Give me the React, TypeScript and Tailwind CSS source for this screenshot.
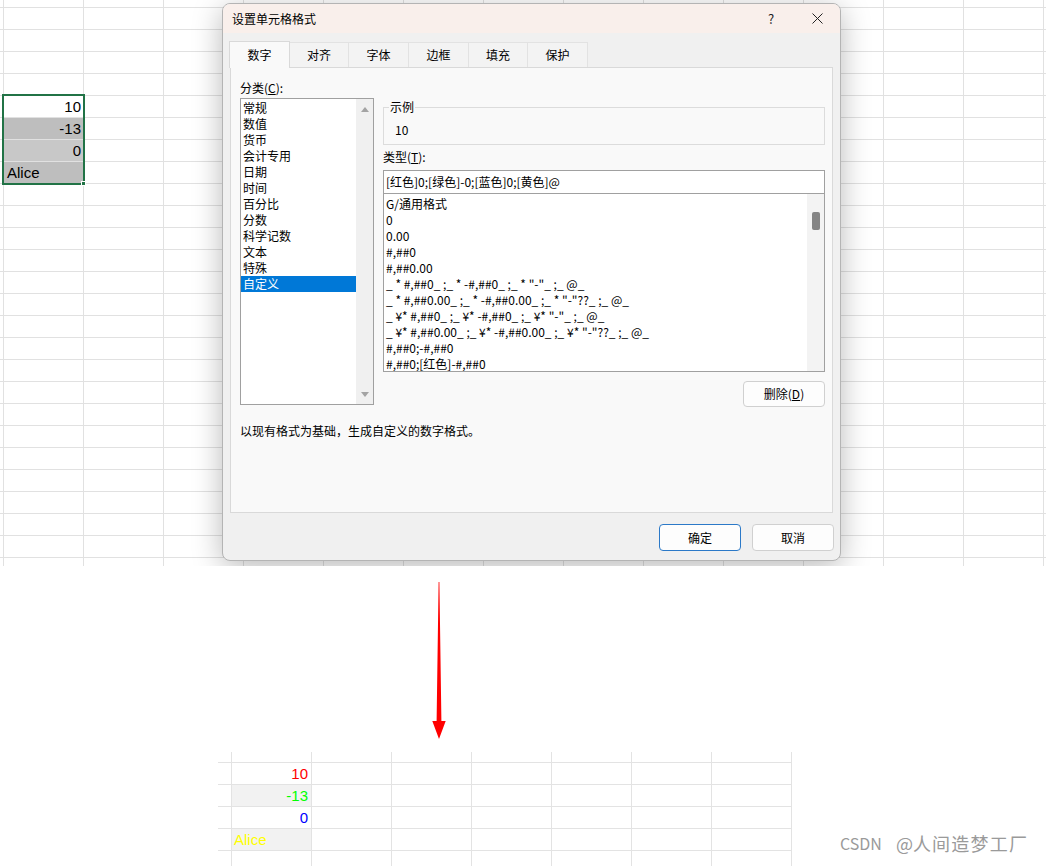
import React from "react";

const topRowH = (i: number) => (i === 0 || i === 26 ? "h-[8px]" : "h-[22px]");
const topColW = (j: number) => (j === 0 ? "w-[4px]" : j === 14 ? "flex-1" : "w-[80px]");

type Val = { t: string; bg: string; align: string; color: string };

const topVals: Record<number, Val> = {
  5: { t: "10", bg: "bg-white", align: "justify-end pr-[2px]", color: "text-black" },
  6: { t: "-13", bg: "bg-[#bebebe]", align: "justify-end pr-[2px]", color: "text-black" },
  7: { t: "0", bg: "bg-[#c8c8c8]", align: "justify-end pr-[2px]", color: "text-black" },
  8: { t: "Alice", bg: "bg-[#bebebe]", align: "justify-start pl-[3px]", color: "text-black" },
};

function TopSheet() {
  const rows = Array.from({ length: 27 }, (_, i) => i);
  const cols = Array.from({ length: 15 }, (_, j) => j);
  return (
    <div className="flex flex-col">
      {rows.map((i) => (
        <div key={i} className={`flex ${topRowH(i)}`}>
          {cols.map((j) => {
            const v = j === 1 ? topVals[i] : undefined;
            return (
              <div
                key={j}
                className={`${topColW(j)} shrink-0 border-[#e1e1e1] ${j === 14 ? "" : "border-r"} ${
                  i === 26 ? "" : "border-b"
                } ${v ? `${v.bg} flex items-center ${v.align}` : ""}`}
              >
                {v && <span className={`text-[15px] leading-[17px] ${v.color}`}>{v.t}</span>}
              </div>
            );
          })}
        </div>
      ))}
    </div>
  );
}

const botRowH = (i: number) =>
  i === 0 ? "h-[11px]" : i === 5 ? "h-[15px]" : "h-[22px]";
const botColW = (j: number) => (j === 0 ? "w-[14px]" : "w-[80px]");

const botVals: Record<number, Val> = {
  1: { t: "10", bg: "bg-white", align: "justify-end pr-[3px]", color: "text-[#ff0000]" },
  2: { t: "-13", bg: "bg-[#f2f2f2]", align: "justify-end pr-[3px]", color: "text-[#00ff00]" },
  3: { t: "0", bg: "bg-white", align: "justify-end pr-[3px]", color: "text-[#0000ff]" },
  4: { t: "Alice", bg: "bg-[#f2f2f2]", align: "justify-start pl-[2px]", color: "text-[#ffff00]" },
};

function BottomSheet() {
  const rows = Array.from({ length: 6 }, (_, i) => i);
  const cols = Array.from({ length: 8 }, (_, j) => j);
  return (
    <div className="flex flex-col w-[574px]">
      {rows.map((i) => (
        <div key={i} className={`flex ${botRowH(i)}`}>
          {cols.map((j) => {
            const v = j === 1 ? botVals[i] : undefined;
            return (
              <div
                key={j}
                className={`${botColW(j)} shrink-0 border-[#e3e3e3] border-r ${
                  i === 5 ? "" : "border-b"
                } ${v ? `${v.bg} flex items-center ${v.align}` : ""}`}
              >
                {v && <span className={`text-[15px] leading-[17px] ${v.color}`}>{v.t}</span>}
              </div>
            );
          })}
        </div>
      ))}
    </div>
  );
}

const categories = ["常规", "数值", "货币", "会计专用", "日期", "时间", "百分比", "分数", "科学记数", "文本", "特殊", "自定义"];

const formats = [
  "G/通用格式",
  "0",
  "0.00",
  "#,##0",
  "#,##0.00",
  '_ * #,##0_ ;_ * -#,##0_ ;_ * "-"_ ;_ @_',
  '_ * #,##0.00_ ;_ * -#,##0.00_ ;_ * "-"??_ ;_ @_',
  '_ ¥* #,##0_ ;_ ¥* -#,##0_ ;_ ¥* "-"_ ;_ @_',
  '_ ¥* #,##0.00_ ;_ ¥* -#,##0.00_ ;_ ¥* "-"??_ ;_ @_',
  "#,##0;-#,##0",
  "#,##0;[红色]-#,##0",
];

const tabs: { t: string; w: string }[] = [
  { t: "对齐", w: "w-[59px]" },
  { t: "字体", w: "w-[60px]" },
  { t: "边框", w: "w-[60px]" },
  { t: "填充", w: "w-[59px]" },
  { t: "保护", w: "w-[60px]" },
];

function Dialog() {
  return (
    <div className="absolute left-[222px] top-[3px] w-[619px] h-[558px] rounded-[8px] border border-[#b4b4b4] bg-[#f0f0f0] shadow-[0_6px_30px_rgba(0,0,0,0.28)] overflow-hidden flex flex-col font-['Noto_Sans_CJK_SC','Noto_Sans',sans-serif] text-[12px] leading-[16px] text-black">
      {/* title bar */}
      <div className="h-[29px] shrink-0 bg-[#f9efeb] flex items-center">
        <span className="pl-[9px] text-[12px]">设置单元格格式</span>
        <div className="ml-auto flex h-full">
          <div className="w-[46px] h-full flex items-center justify-center text-[13px] text-[#222]">?</div>
          <div className="w-[46px] h-full flex items-center justify-center">
            <svg width="11" height="11" viewBox="0 0 11 11">
              <path d="M0.5 0.5 L10.5 10.5 M10.5 0.5 L0.5 10.5" stroke="#222" strokeWidth="1" fill="none" />
            </svg>
          </div>
        </div>
      </div>

      {/* tabs */}
      <div className="mt-[8px] ml-[6px] flex items-end h-[26px]">
        <div className="relative z-10 -mb-px w-[61px] h-[27px] border border-b-0 border-[#d9d9d9] bg-[#f9f9f9] flex items-center justify-center">
          数字
        </div>
        {tabs.map((tb) => (
          <div
            key={tb.t}
            className={`${tb.w} h-[25px] border-t border-r border-[#e2e2e2] bg-[#f3f3f3] flex items-center justify-center`}
          >
            {tb.t}
          </div>
        ))}
      </div>

      {/* panel */}
      <div className="ml-[7px] w-[603px] h-[446px] shrink-0 border border-[#d9d9d9] bg-[#f9f9f9] pt-[12px] pl-[9px] pr-[7px] flex flex-col">
        <div className="flex gap-[9px]">
          {/* left column */}
          <div className="w-[134px] flex flex-col">
            <div className="h-[16px]">
              分类(<span className="underline">C</span>):
            </div>
            <div className="mt-[2px] h-[307px] border border-[#a0a0a0] bg-white flex">
              <div className="flex-1 pt-[1px] flex flex-col">
                {categories.map((c, idx) => (
                  <div
                    key={c}
                    className={`h-[16px] pl-[2px] ${idx === 11 ? "bg-[#0078d7] text-white" : ""}`}
                  >
                    {c}
                  </div>
                ))}
              </div>
              <div className="w-[17px] bg-[#f0f0f0] flex flex-col items-center justify-between pt-[8px] pb-[7px]">
                <svg width="8" height="5" viewBox="0 0 8 5">
                  <path d="M0 5 L4 0 L8 5 Z" fill="#a3a3a3" />
                </svg>
                <svg width="8" height="5" viewBox="0 0 8 5">
                  <path d="M0 0 L8 0 L4 5 Z" fill="#a3a3a3" />
                </svg>
              </div>
            </div>
          </div>

          {/* right column */}
          <div className="w-[442px] flex flex-col pt-[19px]">
            <fieldset className="h-[46px] border border-[#dcdcdc]">
              <legend className="ml-[5px] px-[1px] leading-[16px]">示例</legend>
              <div className="mt-[7px] pl-[11px] leading-[16px]">10</div>
            </fieldset>
            <div className="mt-[4px] h-[16px]">
              类型(<span className="underline">T</span>):
            </div>
            <div className="mt-[5px] h-[24px] border border-[#a0a0a0] bg-white flex items-center pl-[2px]">
              [红色]0;[绿色]-0;[蓝色]0;[黄色]@
            </div>
            <div className="h-[178px] border border-[#a0a0a0] border-t-0 bg-white flex overflow-hidden">
              <div className="flex-1 pt-[2px] pl-[2px] flex flex-col">
                {formats.map((f) => (
                  <div key={f} className="h-[16px] shrink-0 whitespace-pre">
                    {f}
                  </div>
                ))}
              </div>
              <div className="w-[17px] bg-[#f3f3f3] pt-[18px] flex justify-center">
                <div className="w-[8px] h-[18px] rounded-[2px] bg-[#858585]" />
              </div>
            </div>
            <div className="mt-[9px] flex justify-end">
              <div className="w-[82px] h-[26px] rounded-[4px] border border-[#d0d0d0] bg-[#fdfdfd] flex items-center justify-center">
                删除(<span className="underline">D</span>)
              </div>
            </div>
          </div>
        </div>
        <div className="mt-[16px] leading-[16px]">以现有格式为基础，生成自定义的数字格式。</div>
      </div>

      {/* buttons */}
      <div className="mt-[11px] flex justify-end gap-[11px] pr-[6px]">
        <div className="w-[82px] h-[27px] rounded-[4px] border border-[#2b79c8] bg-[#fdfdfd] flex items-center justify-center">
          确定
        </div>
        <div className="w-[82px] h-[27px] rounded-[4px] border border-[#d0d0d0] bg-[#fdfdfd] flex items-center justify-center">
          取消
        </div>
      </div>
    </div>
  );
}

export default function App() {
  return (
    <div className="relative w-[1046px] h-[866px] bg-white overflow-hidden font-['Liberation_Sans',Arial,sans-serif]">
      <div className="relative h-[566px] overflow-hidden">
        <TopSheet />
        {/* selection */}
        <div className="absolute left-[2px] top-[94px] w-[83px] h-[91px] border-2 border-[#217346]" />
        <div className="absolute left-[81px] top-[181px] w-[5px] h-[5px] bg-[#217346] border border-white" />
        <Dialog />
      </div>

      <div className="flex flex-col">
        <div className="ml-[431px] mt-[16px]">
          <svg width="16" height="158" viewBox="0 0 16 158">
            <path d="M7.6 0 L8.4 0 L10.4 139 L14.7 139 L8 157 L1.3 139 L5.6 139 Z" fill="#ff0000" />
          </svg>
        </div>
        <div className="ml-[218px] mt-[12px]">
          <BottomSheet />
        </div>
      </div>

      <div className="absolute left-[840px] top-[833px] flex items-center leading-[20px] text-[#9a9a9a] font-['Noto_Sans_CJK_SC',sans-serif] whitespace-nowrap">
        <span className="text-[16px]">CSDN</span>
        <span className="ml-[14px] text-[18px]">@</span>
        <span className="text-[18px] tracking-[1.2px]">人间造梦工厂</span>
      </div>
    </div>
  );
}
